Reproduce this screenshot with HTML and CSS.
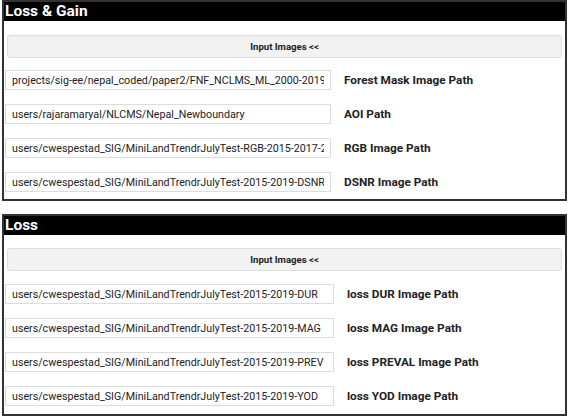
FILE: index.html
```html
<!DOCTYPE html>
<html>
<head>
<meta charset="utf-8">
<link rel="stylesheet" href="styles.css">
</head>
<body>
<div class="panel">
  <div class="panel-header">Loss &amp; Gain</div>
  <div class="panel-body">
    <button class="toggle">Input Images &lt;&lt;</button>
    <div class="rows">
      <div class="row"><input class="path" value="projects/sig-ee/nepal_coded/paper2/FNF_NCLMS_ML_2000-2019"><span class="label">Forest Mask Image Path</span></div>
      <div class="row"><input class="path" value="users/rajaramaryal/NLCMS/Nepal_Newboundary"><span class="label">AOI Path</span></div>
      <div class="row"><input class="path" value="users/cwespestad_SIG/MiniLandTrendrJulyTest-RGB-2015-2017-2019"><span class="label">RGB Image Path</span></div>
      <div class="row"><input class="path" value="users/cwespestad_SIG/MiniLandTrendrJulyTest-2015-2019-DSNR"><span class="label">DSNR Image Path</span></div>
    </div>
  </div>
</div>
<div class="panel second">
  <div class="panel-header">Loss</div>
  <div class="panel-body">
    <button class="toggle">Input Images &lt;&lt;</button>
    <div class="rows">
      <div class="row"><input class="path" value="users/cwespestad_SIG/MiniLandTrendrJulyTest-2015-2019-DUR"><span class="label">loss DUR Image Path</span></div>
      <div class="row"><input class="path" value="users/cwespestad_SIG/MiniLandTrendrJulyTest-2015-2019-MAG"><span class="label">loss MAG Image Path</span></div>
      <div class="row"><input class="path" value="users/cwespestad_SIG/MiniLandTrendrJulyTest-2015-2019-PREV"><span class="label">loss PREVAL Image Path</span></div>
      <div class="row"><input class="path" value="users/cwespestad_SIG/MiniLandTrendrJulyTest-2015-2019-YOD"><span class="label">loss YOD Image Path</span></div>
    </div>
  </div>
</div>
</body>
</html>
```
FILE: styles.css
```css
html, body {
  margin: 0;
  padding: 0;
  background: #ffffff;
  font-family: Roboto, "Liberation Sans", sans-serif;
}
.panel {
  margin: 0 2px;
  border: 2px solid #333333;
  background: #ffffff;
}
.panel.second {
  margin-top: 13px;
}
.panel-header {
  background: #000000;
  color: #ffffff;
  font-weight: bold;
  font-size: 15.5px;
  line-height: 19px;
  height: 19px;
  padding-left: 1px;
}
.panel-body {
  padding: 14px 3px 7px 1px;
}
.second .panel-body {
  padding-top: 13px;
  padding-bottom: 8px;
}
.toggle {
  display: block;
  width: calc(100% - 2px);
  margin-left: 2px;
  height: 23px;
  background: #f2f2f2;
  border: 1px solid #dddddd;
  border-radius: 3px;
  font-family: Roboto, "Liberation Sans", sans-serif;
  font-weight: bold;
  font-size: 9.6px;
  color: #222222;
  padding: 0;
}
.rows {
  display: flex;
  flex-direction: column;
  gap: 14px;
  margin-top: 12px;
}
.second .rows {
  margin-top: 13px;
}
.row {
  display: flex;
  align-items: center;
  gap: 13px;
  height: 20px;
}
.path {
  width: 326px;
  height: 20px;
  box-sizing: border-box;
  border: 1px solid #dcdcdc;
  padding: 0 6px;
  font-family: Roboto, "Liberation Sans", sans-serif;
  font-size: 10.7px;
  color: #222222;
  background: #ffffff;
  margin: 0;
}
.second .path {
  width: 329px;
}
.label {
  font-weight: bold;
  font-size: 11.8px;
  color: #222222;
}
```
